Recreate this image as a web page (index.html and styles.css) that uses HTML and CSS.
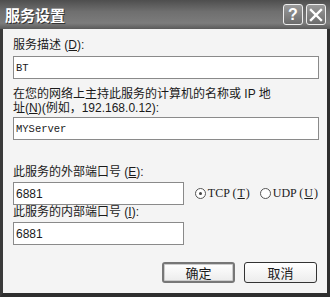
FILE: index.html
```html
<!DOCTYPE html>
<html>
<head>
<meta charset="utf-8">
<link rel="stylesheet" href="styles.css">
</head>
<body>
<div class="window">
  <div class="titlebar">
    <span class="title">服务设置</span>
    <div class="tbtns">
      <span class="tbtn help">?</span>
      <span class="tbtn close"><svg width="14" height="14" viewBox="0 0 14 14"><path d="M2 2L12 12M12 2L2 12" stroke="#fff" stroke-width="2.4" stroke-linecap="square"/></svg></span>
    </div>
  </div>
  <div class="content">
    <div class="label l1">服务描述 (<u>D</u>):</div>
    <div class="input wide mono">BT</div>
    <div class="para">
      <div class="label">在您的网络上主持此服务的计算机的名称或 IP 地</div>
      <div class="label">址(<u>N</u>)(例如，192.168.0.12):</div>
    </div>
    <div class="input wide mono i2">MYServer</div>
    <div class="label l3">此服务的外部端口号 (<u>E</u>):</div>
    <div class="row">
      <div class="input narrow sans">6881</div>
      <div class="radios">
        <span class="radio"><span class="circle on"></span>TCP (<u>T</u>)</span>
        <span class="radio"><span class="circle"></span>UDP (<u>U</u>)</span>
      </div>
    </div>
    <div class="label">此服务的内部端口号 (<u>I</u>):</div>
    <div class="input narrow sans">6881</div>
    <div class="buttons">
      <span class="btn default">确定</span>
      <span class="btn">取消</span>
    </div>
  </div>
</div>
</body>
</html>
```
FILE: styles.css
```css
html, body {
  margin: 0;
  padding: 0;
  background: #f3f3f3;
}
.window {
  width: 330px;
  height: 297px;
  box-sizing: border-box;
  display: flex;
  flex-direction: column;
  border-left: 3px solid #3a3a3a;
  border-right: 3px solid #2e2e2e;
  border-bottom: 4px solid #2e2e2e;
  background: #f4f4f4;
  font-family: "Liberation Sans", "Noto Sans CJK SC", sans-serif;
  color: #1a1a1a;
}
.titlebar {
  height: 29px;
  margin: 0 -3px;
  display: flex;
  align-items: center;
  justify-content: space-between;
  background: linear-gradient(to bottom, #4e4e4e 0%, #6f6f6f 40%, #7c7c7c 80%, #5a5a5a 100%);
  padding: 0 4px 0 5px;
}
.title {
  color: #fff;
  font-family: "Noto Sans CJK SC", sans-serif;
  font-weight: bold;
  font-size: 15px;
  text-shadow: 1px 1px 0 #333;
}
.tbtns {
  display: flex;
  gap: 3px;
}
.tbtn {
  width: 18px;
  height: 19px;
  border: 1px solid #eee;
  border-radius: 3px;
  background: linear-gradient(to bottom, #9a9a9a, #6c6c6c);
  display: flex;
  align-items: center;
  justify-content: center;
  color: #fff;
  font-family: "Liberation Sans", sans-serif;
  font-weight: bold;
  font-size: 16px;
}
.content {
  flex: 1;
  padding: 9px 9px 0 10px;
  font-size: 12px;
}
.label {
  line-height: 14px;
  height: 14px;
  white-space: nowrap;
}
u {
  text-decoration: underline;
  text-underline-offset: 1px;
}
.para {
  margin-top: 8px;
}
.input {
  height: 23px;
  box-sizing: border-box;
  border: 1px solid #8a8a8a;
  background: #fff;
  padding: 0 2px;
  display: flex;
  align-items: center;
  margin-top: 4px;
}
.i2 {
  margin-top: 2px;
}
.wide {
  width: 306px;
}
.narrow {
  width: 171px;
  margin-top: 3px;
}
.mono {
  font-family: "Liberation Mono", monospace;
  font-size: 10.5px;
}
.sans {
  font-family: "Liberation Sans", sans-serif;
  font-size: 12px;
}
.l3 {
  margin-top: 25px;
}
.row {
  display: flex;
  align-items: center;
}
.row .input {
  margin-top: 3px;
}
.radios {
  display: flex;
  gap: 10px;
  margin-left: 11px;
  margin-top: 3px;
  font-family: "Liberation Serif", serif;
  font-size: 12px;
  white-space: nowrap;
}
.radio {
  display: flex;
  align-items: center;
  gap: 1px;
  white-space: nowrap;
}
.circle {
  width: 11px;
  height: 11px;
  box-sizing: border-box;
  border: 1px solid #555;
  border-radius: 50%;
  background: #fff;
  display: inline-flex;
  align-items: center;
  justify-content: center;
  margin-right: 1px;
  flex: none;
}
.circle.on::after {
  content: "";
  width: 3px;
  height: 3px;
  border-radius: 50%;
  background: #444;
}
.buttons {
  display: flex;
  justify-content: flex-end;
  gap: 9px;
  margin-top: 17px;
  padding-right: 1px;
}
.btn {
  width: 73px;
  height: 21px;
  box-sizing: border-box;
  border: 1px solid #333;
  border-radius: 3px;
  background: linear-gradient(to bottom, #fff, #ececec);
  display: flex;
  align-items: center;
  justify-content: center;
  font-family: "Noto Sans CJK SC", sans-serif;
  font-size: 13px;
}
.btn.default {
  border: 2px solid #777;
  box-shadow: inset 0 0 0 1px #ccc;
}
```
